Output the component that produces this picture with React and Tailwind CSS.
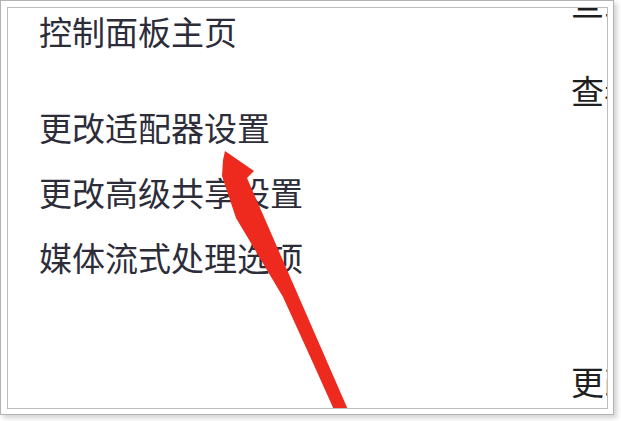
export default function App() {
    const font = { fontFamily: '"Noto Sans CJK SC", "Noto Sans", sans-serif' }

    const leftLinks = [
        { text: "控制面板主页", mt: "mt-[3px]" },
        { text: "更改适配器设置", mt: "mt-[56px]" },
        { text: "更改高级共享设置", mt: "mt-[25px]" },
        { text: "媒体流式处理选项", mt: "mt-[25px]" },
    ]

    return (
        <div className="w-[621px] h-[421px] bg-white">
            <div className="w-[614px] h-[415px] border border-[#b3b3b3] bg-white pl-[6px] pr-[5px] pt-[6px] pb-[5px] shadow-[3px_3px_5px_rgba(0,0,0,0.18)]">
                <div
                    className="relative w-full h-full border border-[#bdbdbd] bg-white overflow-hidden grid grid-cols-[563px_1fr] text-[33px] leading-[40px] text-[#2d2d3a]"
                    style={font}
                >
                    {/* left task links */}
                    <div className="flex flex-col pl-[31px]">
                        {leftLinks.map(link => (
                            <div key={link.text} className={`${link.mt} whitespace-nowrap`}>{link.text}</div>
                        ))}
                    </div>

                    {/* right pane, cut off by the frame */}
                    <div className="flex flex-col overflow-hidden whitespace-nowrap text-[#1e1e1e]">
                        <div className="mt-[-26px]">旦三</div>
                        <div className="mt-[48px]">查看基本网络信息并设置连接</div>
                        <div className="mt-[251px]">更改网络设置</div>
                    </div>

                    {/* red annotation arrow */}
                    <svg
                        className="absolute left-0 top-0 pointer-events-none"
                        width="601"
                        height="402"
                        viewBox="8 8 601 402"
                    >
                        <polygon
                            points="225,151 254,171 247,178 349,412 335,412 313,363 283,297 236,218 222,176 223,160"
                            fill="#ee2a1e"
                        />
                    </svg>
                </div>
            </div>
        </div>
    )
}
